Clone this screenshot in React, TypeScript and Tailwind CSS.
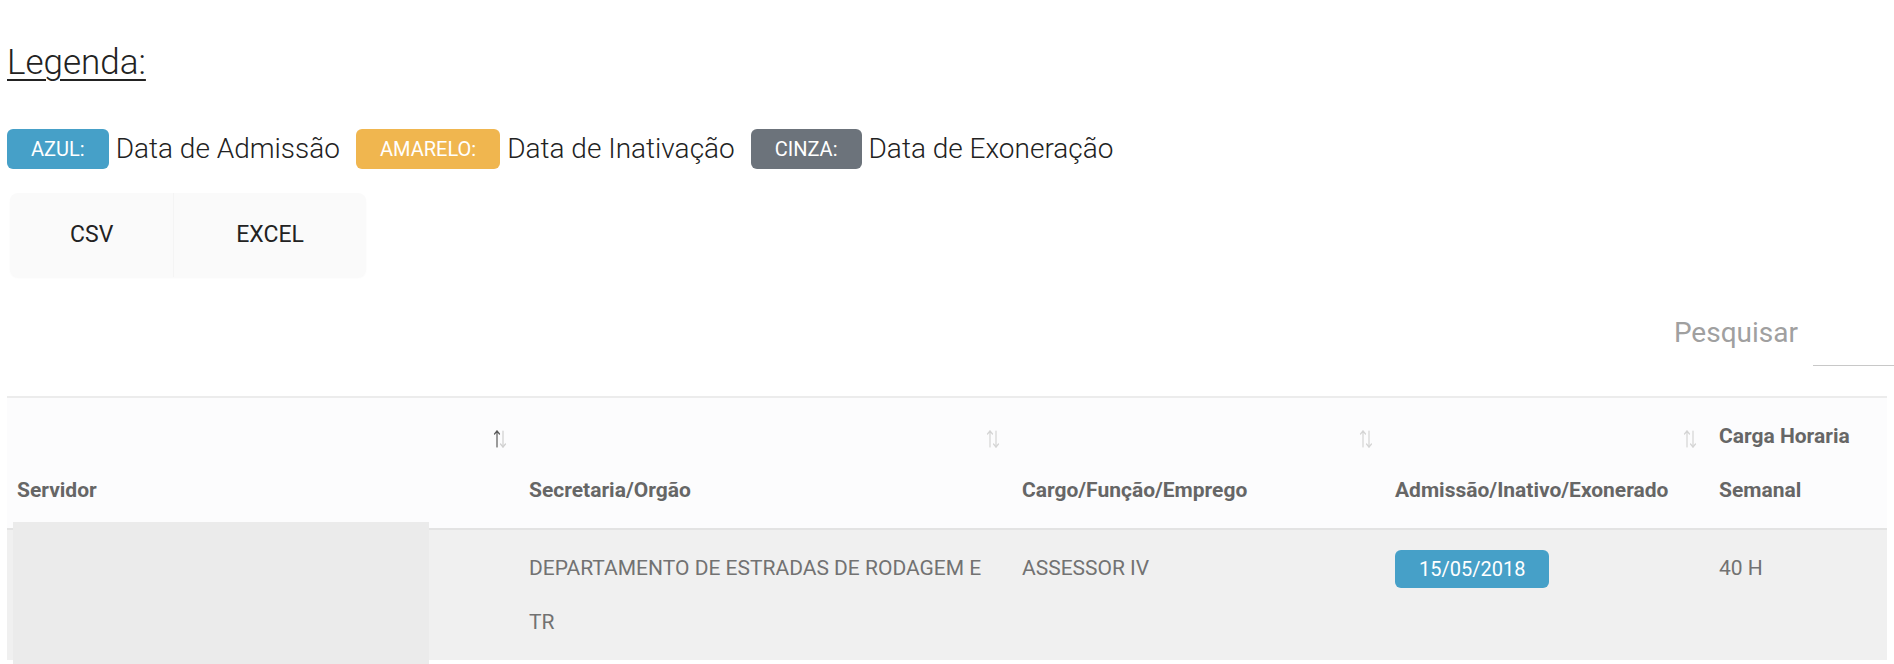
import React from 'react';

interface Legend {
    label: string;
    text: string;
    color: string;
}

const legends: Legend[] = [
    { label: 'AZUL:', text: 'Data de Admissão', color: 'bg-[#46a0c8]' },
    { label: 'AMARELO:', text: 'Data de Inativação', color: 'bg-[#f0b64f]' },
    { label: 'CINZA:', text: 'Data de Exoneração', color: 'bg-[#6c737b]' },
];

const columns = [
    { title: 'Servidor', active: true },
    { title: 'Secretaria/Orgão' },
    { title: 'Cargo/Função/Emprego' },
    { title: 'Admissão/Inativo/Exonerado' },
    { title: 'Carga Horaria Semanal', noSort: true },
];

// setas de ordenação da tabela
function SortIcon({ active }: { active?: boolean }) {
    return (
        <svg width="14" height="20" viewBox="0 0 14 20" fill="none" strokeWidth="1.2" strokeLinecap="round" strokeLinejoin="round">
            <g stroke={active ? '#5a5a5a' : '#d4d4d4'}>
                <path d="M4 18V2" />
                <path d="M1.5 5L4 2l2.5 3" />
            </g>
            <g stroke={active ? '#cfcfcf' : '#d4d4d4'}>
                <path d="M10 2v16" />
                <path d="M7.5 15l2.5 3 2.5-3" />
            </g>
        </svg>
    );
}

function App() {
    return (
        <div className="min-h-screen bg-white font-['Roboto',sans-serif] overflow-hidden">
            <div className="px-[7px]">
                {/* Legenda */}
                <h2 className="mt-[43px] text-[35px] leading-[40px] font-light text-[#222] underline underline-offset-[5px] decoration-[2px]">
                    Legenda:
                </h2>

                <div className="mt-[46px] flex items-center h-[40px]">
                    {legends.map((l) => (
                        <div key={l.label} className="flex items-center mr-[16px]">
                            <span className={`${l.color} h-[40px] px-[24px] rounded-[6px] text-white text-[20px] leading-[40px]`}>
                                {l.label}
                            </span>
                            <span className="ml-[7px] text-[28px] font-light text-[#222] leading-[40px]">{l.text}</span>
                        </div>
                    ))}
                </div>

                {/* Exportar */}
                <div className="mt-[24px] ml-[3px] inline-flex h-[84px] rounded-[8px] bg-[#fafafa] shadow-[0_1px_2px_rgba(0,0,0,0.03)]">
                    <button className="px-[60px] text-[23px] text-[#222] border-r border-[#f4f4f4]">CSV</button>
                    <button className="px-[62px] text-[23px] text-[#222]">EXCEL</button>
                </div>

                {/* Pesquisa */}
                <div className="mt-[40px] -mr-[7px] flex justify-end items-start gap-[15px]">
                    <label className="text-[28px] leading-[32px] text-[#a0a0a0]">Pesquisar</label>
                    <input className="h-[49px] w-[81px] border-b border-[#c8c8c8] outline-none" />
                </div>

                {/* Tabela */}
                <div className="relative mt-[30px]">
                    <div className="border-t-2 border-[#ececec] bg-[#fcfcfd] grid grid-cols-[512px_493px_373px_324px_175px] border-b-2 border-b-[#e3e3e3]">
                        {columns.map((c) => (
                            <div key={c.title} className="relative flex items-end px-[10px] py-[11px] text-[21px] font-bold leading-[54px] text-[#666]">
                                <span>{c.title}</span>
                                {!c.noSort && (
                                    <span className="absolute right-[12px] top-[31px]">
                                        <SortIcon active={c.active} />
                                    </span>
                                )}
                            </div>
                        ))}
                    </div>
                    <div className="bg-[#f0f0f0] grid grid-cols-[512px_493px_373px_324px_175px] text-[21px] leading-[54px] text-[#727272]">
                        <div className="px-[10px] py-[11px]" />
                        <div className="px-[10px] py-[11px]">
                            <div className="w-[465px]">DEPARTAMENTO DE ESTRADAS DE RODAGEM E TR</div>
                        </div>
                        <div className="px-[10px] py-[11px]">ASSESSOR IV</div>
                        <div className="px-[10px] py-[11px]">
                            <span className="inline-block bg-[#46a0c8] text-white text-[20px] rounded-[6px] px-[24px] leading-[38px] align-middle">
                                15/05/2018
                            </span>
                        </div>
                        <div className="px-[10px] py-[11px]">40 H</div>
                    </div>
                    {/* dados ocultados */}
                    <div className="absolute left-[6px] top-[126px] w-[416px] h-[150px] bg-[#ebebeb]" />
                </div>
            </div>
        </div>
    );
}

export default App;
